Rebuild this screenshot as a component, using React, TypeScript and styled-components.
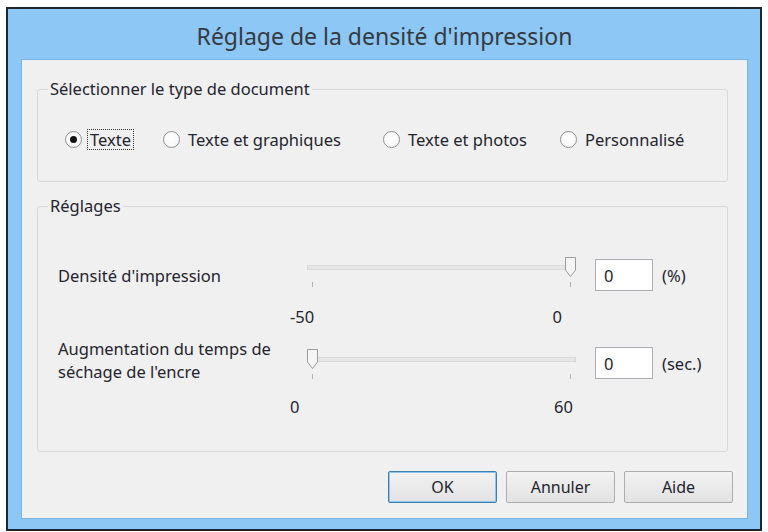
import React from 'react';
import styled, { createGlobalStyle } from 'styled-components';

const GlobalStyle = createGlobalStyle`
  html, body {
    margin: 0;
    padding: 0;
    background: #ffffff;
  }
  body {
    font-family: "Noto Sans", "Open Sans", sans-serif;
    color: #24242e;
  }
`;

const Page = styled.div`
  width: 768px;
  height: 532px;
  box-sizing: border-box;
  padding: 7px 0 0 6px;
`;

const Window = styled.div`
  width: 756px;
  height: 524px;
  box-sizing: border-box;
  border: 2px solid #1c2630;
  background: #8cc7f6;
  display: flex;
  flex-direction: column;
  padding: 0 12px 10px 13px;
`;

const TitleBar = styled.div`
  height: 50px;
  display: flex;
  align-items: center;
  justify-content: center;
  padding-top: 3px;
  box-sizing: border-box;
  font-size: 23px;
  color: #363a40;
`;

const Client = styled.div`
  flex: 1;
  display: flex;
  flex-direction: column;
  background: #f0f0f0;
  border: 1px solid #79b4e6;
  padding: 19px 14px 15px 15px;
  font-size: 16.5px;
`;

const GroupBox = styled.fieldset<{ $pt: number; $pb: number }>`
  margin: 0 5px 0 0;
  border: 1px solid #d8d8d8;
  border-radius: 3px;
  padding: ${p => p.$pt}px 0 ${p => p.$pb}px 10px;
  min-width: 0;
  & + & {
    margin-top: 14px;
  }
`;

const Legend = styled.legend`
  padding: 0 2px;
  line-height: 20px;
`;

const RadioGrid = styled.div`
  display: grid;
  grid-template-columns: 98px 220px 177px auto;
  margin-left: 17px;
  height: 18px;
  align-items: center;
`;

const RadioItem = styled.label`
  display: flex;
  align-items: center;
  gap: 6px;
  white-space: nowrap;
`;

const RadioCircle = styled.span<{ $checked?: boolean }>`
  width: 15px;
  height: 15px;
  border-radius: 50%;
  border: 1px solid #8e8f8f;
  background: radial-gradient(circle at 50% 40%, #ffffff 0%, #f4f4f4 100%);
  display: flex;
  align-items: center;
  justify-content: center;
  flex: none;
  &::after {
    content: '';
    width: 7px;
    height: 7px;
    border-radius: 50%;
    background: #141414;
    display: ${p => (p.$checked ? 'block' : 'none')};
  }
`;

const RadioText = styled.span<{ $focus?: boolean }>`
  padding: 0 2px;
  line-height: 19px;
  outline: ${p => (p.$focus ? '1px dotted #333' : 'none')};
`;

const SettingsGrid = styled.div`
  display: grid;
  grid-template-columns: 230px 295px 70px auto;
  margin-left: 10px;
`;

const SettingLabel = styled.div<{ $lift?: number }>`
  align-self: center;
  line-height: 23px;
  margin: ${p => (p.$lift ? `-${p.$lift}px 0 -${p.$lift}px` : '0')};
  position: relative;
  top: ${p => (p.$lift ? '-3px' : '0')};
`;

const SliderBox = styled.div<{ $shift: number }>`
  display: flex;
  flex-direction: column;
  margin-top: ${p => p.$shift}px;
`;

const TrackArea = styled.div`
  position: relative;
  height: 20px;
  margin: 0 7px 0 19px;
`;

const Track = styled.div`
  position: absolute;
  left: 0;
  right: 0;
  top: 8px;
  height: 3px;
  background: #e6e6e6;
  border: 1px solid #d9d9d9;
`;

const Thumb = styled.svg`
  position: absolute;
  top: 0;
  width: 11px;
  height: 20px;
`;

const Ticks = styled.div`
  display: flex;
  justify-content: space-between;
  margin: 5px 12px 0 24px;
`;

const Tick = styled.span`
  width: 1px;
  height: 5px;
  background: #b4b4b4;
`;

const NumberBox = styled.div`
  margin-left: 12px;
  width: 58px;
  height: 32px;
  box-sizing: border-box;
  border: 1px solid #acadb3;
  background: #ffffff;
  display: flex;
  align-items: center;
  padding-left: 8px;
`;

const Unit = styled.div`
  align-self: center;
  margin-left: 9px;
`;

const ScaleRow = styled.div<{ $right: number }>`
  grid-column: 2;
  display: flex;
  justify-content: space-between;
  padding: 0 ${p => p.$right}px 0 2px;
  line-height: 18px;
`;

const Gap = styled.div<{ $h: number }>`
  grid-column: 1 / -1;
  height: ${p => p.$h}px;
`;

const ButtonRow = styled.div`
  margin-top: auto;
  display: flex;
  justify-content: flex-end;
  gap: 9px;
`;

const Button = styled.button<{ $default?: boolean }>`
  width: 109px;
  height: 32px;
  font-family: inherit;
  font-size: 16px;
  color: #24242e;
  background: linear-gradient(#f2f2f2, #e3e3e3);
  border: 1px solid ${p => (p.$default ? '#3c7fb1' : '#adadad')};
  box-shadow: ${p => (p.$default ? 'inset 0 0 0 1px #8fc4ee' : 'none')};
  border-radius: 2px;
  padding: 0;
`;

const Slider = ({ pct, shift }: { pct: number; shift: number }) => (
  <SliderBox $shift={shift}>
    <TrackArea>
      <Track />
      <Thumb viewBox="0 0 11 20" style={{ left: `calc(${pct} * (100% - 11px))` }}>
        <path d="M0.5 0.5 H10.5 V13 L5.5 19.5 L0.5 13 Z" fill="#f4f4f4" stroke="#9b9b9b" />
      </Thumb>
    </TrackArea>
    <Ticks>
      <Tick />
      <Tick />
    </Ticks>
  </SliderBox>
);

const radios = [
  { label: 'Texte', checked: true },
  { label: 'Texte et graphiques' },
  { label: 'Texte et photos' },
  { label: 'Personnalisé' },
];

export default function App() {
  return (
    <Page>
      <GlobalStyle />
      <Window>
        <TitleBar>Réglage de la densité d'impression</TitleBar>
        <Client>
          <GroupBox $pt={31} $pb={33}>
            <Legend>Sélectionner le type de document</Legend>
            <RadioGrid>
              {radios.map(r => (
                <RadioItem key={r.label}>
                  <RadioCircle $checked={r.checked} />
                  <RadioText $focus={r.checked}>{r.label}</RadioText>
                </RadioItem>
              ))}
            </RadioGrid>
          </GroupBox>
          <GroupBox $pt={43} $pb={35}>
            <Legend>Réglages</Legend>
            <SettingsGrid>
              <SettingLabel>Densité d'impression</SettingLabel>
              <Slider pct={1} shift={-2} />
              <NumberBox>0</NumberBox>
              <Unit>(%)</Unit>
              <Gap $h={17} />
              <ScaleRow $right={21}>
                <span>-50</span>
                <span>0</span>
              </ScaleRow>
              <Gap $h={21} />
              <SettingLabel $lift={7}>
                Augmentation du temps de
                <br />
                séchage de l'encre
              </SettingLabel>
              <Slider pct={0} shift={2} />
              <NumberBox>0</NumberBox>
              <Unit>(sec.)</Unit>
              <Gap $h={19} />
              <ScaleRow $right={10}>
                <span>0</span>
                <span>60</span>
              </ScaleRow>
            </SettingsGrid>
          </GroupBox>
          <ButtonRow>
            <Button $default>OK</Button>
            <Button>Annuler</Button>
            <Button>Aide</Button>
          </ButtonRow>
        </Client>
      </Window>
    </Page>
  );
}
